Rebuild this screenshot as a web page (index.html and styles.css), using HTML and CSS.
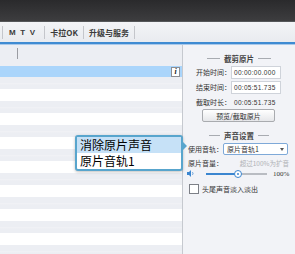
FILE: index.html
```html
<!DOCTYPE html>
<html lang="zh">
<head>
    <meta charset="UTF-8">
    <meta name="viewport" content="width=device-width, initial-scale=1.0">
    <title>截剪原片</title>
    <link rel="stylesheet" href="styles.css">
</head>
<body>
    <div class="titlebar"></div>
    <div class="menubar">
        <span class="menu-item stub"></span>
        <span class="menu-item mtv">M T V</span>
        <span class="menu-item">卡拉OK</span>
        <span class="menu-item">升级与服务</span>
    </div>
    <div class="accent"></div>

    <div class="main">
        <div class="list">
            <div class="list-head"><span class="col-sep"></span></div>
            <div class="row sel"><span class="info">i</span></div>
            <div class="row gray"></div><div class="row"></div>
            <div class="row gray"></div><div class="row"></div>
            <div class="row gray"></div><div class="row"></div>
            <div class="row gray"></div><div class="row"></div>
            <div class="row gray"></div><div class="row"></div>
            <div class="row gray"></div><div class="row"></div>
            <div class="row gray"></div><div class="row"></div>
            <div class="row gray"></div>
        </div>

        <div class="panel">
            <div class="group-title"><span>截剪原片</span></div>
            <div class="field">
                <span class="label">开始时间：</span>
                <span class="box num">00:00:00.000</span>
            </div>
            <div class="field">
                <span class="label">结束时间：</span>
                <span class="box num">00:05:51.735</span>
            </div>
            <div class="field">
                <span class="label">截取时长：</span>
                <span class="plain num">00:05:51.735</span>
            </div>
            <button class="btn">预览/截取原片</button>

            <div class="group-title second"><span>声音设置</span></div>
            <div class="field tight">
                <span class="label">使用音轨：</span>
                <span class="select">原片音轨1<i class="caret"></i></span>
            </div>
            <div class="field tight vol">
                <span class="label">原片音量：</span>
                <span class="hint">超过100%为扩音</span>
            </div>
            <div class="slider-row">
                <svg class="speaker" width="8" height="7" viewBox="0 0 8 7">
                    <path d="M0 2h2l2-2v7L2 5H0z" fill="#3b86d0"/>
                    <path d="M5.5 2.2q1 1.3 0 2.6" stroke="#3b86d0" fill="none" stroke-width="0.8"/>
                </svg>
                <div class="track"><div class="fill"></div><span class="thumb"></span></div>
                <span class="pct">100%</span>
            </div>
            <label class="check"><span class="checkbox"></span>头尾声音淡入淡出</label>
        </div>

        <div class="popup">
            <div class="popup-item active">消除原片声音</div>
            <div class="popup-item">原片音轨1</div>
            <span class="popup-arrow"></span>
        </div>
    </div>
</body>
</html>
```

FILE: styles.css
```css
body { margin: 0; width: 295px; height: 254px; overflow: hidden; font-family: "Noto Sans CJK SC", "Liberation Sans", sans-serif; color: #333; background: #f2f3f7; }

.titlebar { height: 21px; background: linear-gradient(#2a2a2c, #3d3d3f); }
.menubar { height: 21px; display: flex; align-items: center; background: linear-gradient(#f3f4f7, #e9ebef); border-top: 1px solid #55575a; box-sizing: border-box; font-size: 8px; font-weight: 600; color: #3c3c3c; }
.menu-item { padding: 0 5px; height: 13px; line-height: 13px; border-right: 1px solid #c4c6cb; }
.menu-item.stub { width: 2px; padding: 0; }
.menu-item.mtv { font-family: "Liberation Sans", sans-serif; padding: 0 8px 0 6px; letter-spacing: 1.2px; }
.accent { height: 2px; background: #3f8bd2; border-bottom: 1px solid #a9c9ea; }

.main { position: relative; display: flex; height: 209px; }
.list { width: 182px; border-right: 1px solid #c6c9cf; background: #fff; overflow: hidden; }
.list-head { height: 21px; background: #eceef3; position: relative; }
.col-sep { position: absolute; left: 17px; top: 3px; height: 11px; border-left: 1px solid #9a9ca2; }
.row { height: 12px; background: #fff; }
.row.gray { background: linear-gradient(#eceef3 0, #eceef3 6px, #f1f2f6 6px, #eceef3 8px); }
.row.sel { height: 11px; background: #aad5fb; position: relative; }
.info { position: absolute; right: 2px; top: 1px; width: 7px; height: 8px; border: 1px solid #8c8f95; background: #fff; font: italic 700 8px/8px "Liberation Serif", serif; text-align: center; color: #222; }

.panel { flex: 1; display: flex; flex-direction: column; padding-top: 8px; background: #f2f3f7; }
.group-title { display: flex; align-items: center; justify-content: center; gap: 4px; height: 10px; font-size: 7.5px; font-weight: 700; color: #444; }
.group-title::before, .group-title::after { content: ""; width: 13px; border-top: 1px solid #a8abb1; }
.group-title.second { margin-top: 8px; }
.group-title.second::before, .group-title.second::after { width: 11px; }

.field { display: flex; align-items: center; height: 12px; margin-top: 3px; padding-left: 13px; font-size: 7px; }
.label { width: 35px; }
.box { width: 46px; height: 11px; border: 1px solid #cfd3da; background: #fff; line-height: 11px; padding-left: 2px; }
.plain { padding-left: 3px; }
.num { font-family: "Liberation Sans", sans-serif; font-size: 6.5px; letter-spacing: 0.3px; color: #333; }

.btn { align-self: center; margin: 1px 0 0 -1px; width: 73px; height: 13px; padding: 0; border: 1px solid #a9abaf; border-radius: 2px; background: linear-gradient(#fff, #e6e7ea); font-family: inherit; font-size: 7px; color: #333; }

.field.tight { padding-left: 5px; }
.select { position: relative; width: 60px; height: 10px; border: 1px solid #7ea9d8; border-radius: 2px; background: #fff; line-height: 10px; padding-left: 3px; }
.caret { position: absolute; right: 3px; top: 4px; border: 2.5px solid transparent; border-top: 3px solid #555; border-bottom: 0; }
.vol { margin-top: 2px; justify-content: space-between; padding-right: 6px; }
.hint { color: #b0b2b6; font-size: 6.5px; }

.slider-row { display: flex; align-items: center; height: 9px; margin-top: 0; padding-left: 4px; }
.speaker { margin-right: 11px; }
.track { position: relative; width: 61px; height: 2px; background: #b9bcc2; }
.fill { width: 32px; height: 2px; background: #3b86d0; }
.thumb { position: absolute; left: 28px; top: -3px; width: 6px; height: 6px; border: 1px solid #3b86d0; border-radius: 50%; background: #fff; box-sizing: content-box; }
.thumb::after { content: ""; position: absolute; left: 2px; top: 2px; width: 2px; height: 2px; border-radius: 50%; background: #3b86d0; }
.pct { margin-left: 6px; font-family: "Liberation Serif", serif; font-size: 7px; color: #333; }

.check { display: flex; align-items: center; gap: 3px; margin-top: 6px; padding-left: 6px; font-size: 7px; }
.checkbox { width: 8px; height: 8px; border: 1px solid #7d8087; background: #fff; }

.popup { position: absolute; left: 75px; top: 90px; width: 104px; border: 2px solid #58a5cd; border-radius: 3px; background: #fff; box-shadow: 0 1px 3px rgba(0,0,0,0.25); font-size: 12px; color: #000; }
.popup-item { height: 16px; line-height: 16px; padding-left: 3px; }
.popup-item.active { background: #c6e1f7; }
.popup-arrow { position: absolute; right: -6px; top: 5px; border: 4px solid transparent; border-left: 4px solid #58a5cd; border-right: 0; }
```
